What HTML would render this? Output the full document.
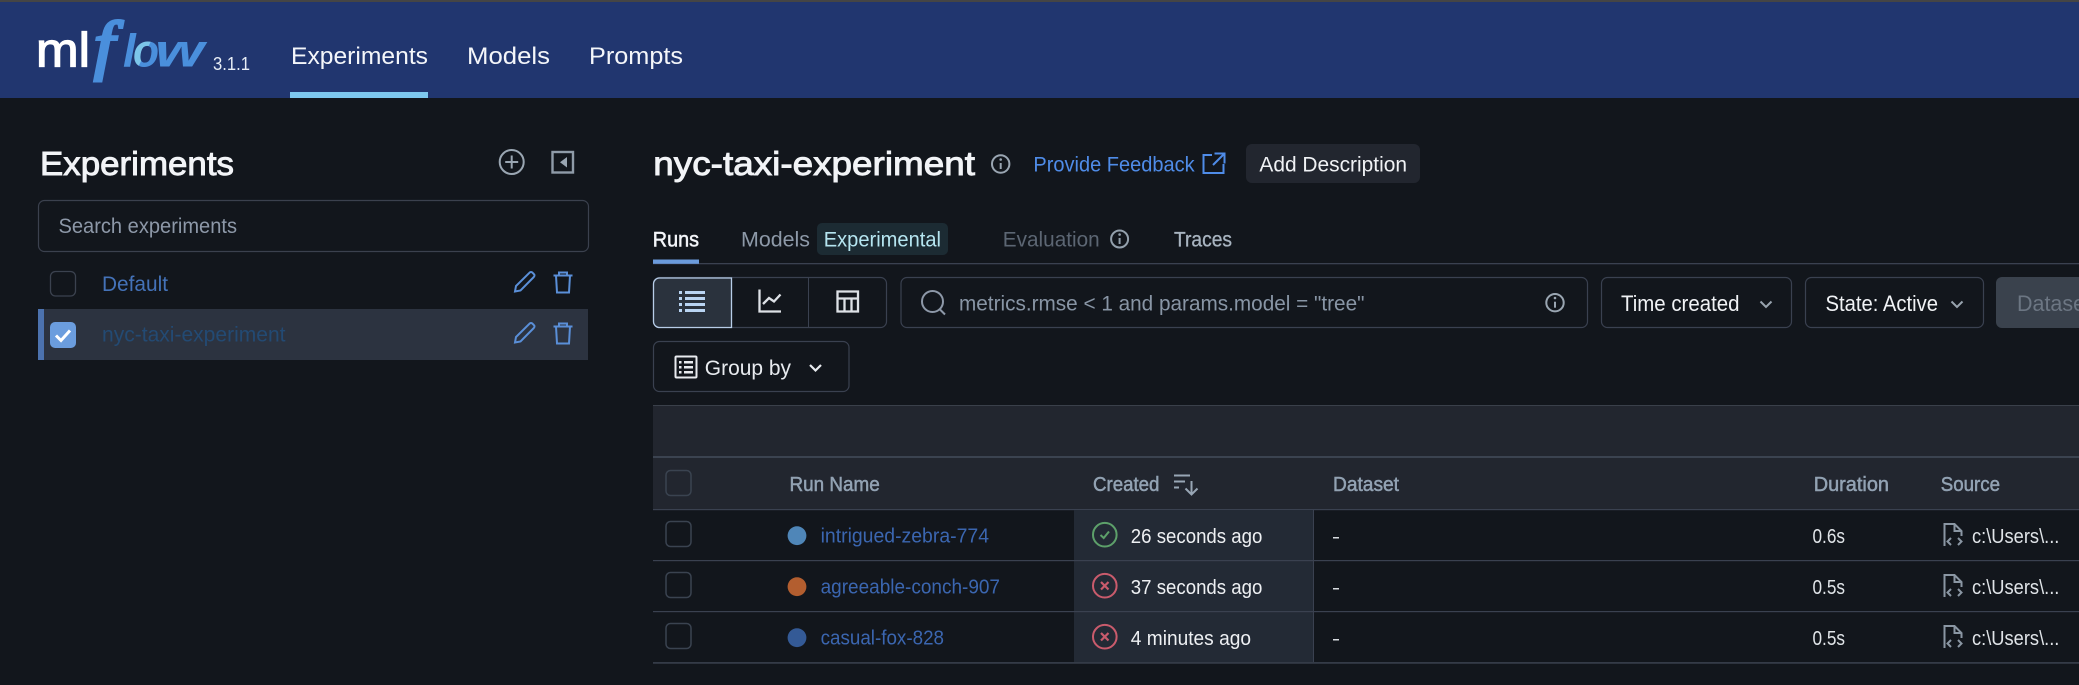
<!DOCTYPE html>
<html><head><meta charset="utf-8"><title>MLflow</title>
<style>
html,body{margin:0;padding:0;background:#12161c;width:2079px;height:685px;overflow:hidden}
svg{display:block}
text{font-family:"Liberation Sans",sans-serif}
</style></head><body>
<svg xmlns="http://www.w3.org/2000/svg" width="2079" height="685" viewBox="0 0 2079 685">
<defs><linearGradient id="og" x1="0" y1="0" x2="1" y2="1"><stop offset="0" stop-color="#7cc6ea"/><stop offset=".5" stop-color="#7cc6ea"/><stop offset=".51" stop-color="#4a8fdc"/><stop offset="1" stop-color="#4a8fdc"/></linearGradient></defs>
<rect width="2079" height="685" fill="#12161c"/>
<!-- header -->
<rect width="2079" height="2" fill="#454545"/>
<rect y="2" width="2079" height="96" fill="#21366f"/>
<rect x="290" y="92" width="138" height="6" fill="#7ec8ee"/>
<text x="36" y="66.7" font-size="48" fill="#fff" stroke="#fff" stroke-width="1.200" textLength="54" lengthAdjust="spacingAndGlyphs">ml</text>
<text transform="translate(94 67) scale(1.080 .96)" font-size="68" fill="#4a8fdc" stroke="#4a8fdc" stroke-width="3.200" style="font-family:'Liberation Serif',serif;font-style:italic">f</text>
<text x="123" y="66.7" font-size="46" font-style="italic" font-weight="bold" fill="#4a8fdc">l</text>
<text x="133" y="66.7" font-size="46" font-style="italic" font-weight="bold" fill="url(#og)" textLength="26" lengthAdjust="spacingAndGlyphs">o</text>
<text x="155" y="66.7" font-size="46" font-style="italic" font-weight="bold" fill="#4a8fdc" textLength="49" lengthAdjust="spacingAndGlyphs">w</text>
<text x="213" y="70" font-size="18" fill="#e8eef6" textLength="37" lengthAdjust="spacingAndGlyphs">3.1.1</text>
<text x="291" y="64" font-size="24.500" fill="#f4f6fa" textLength="137" lengthAdjust="spacingAndGlyphs">Experiments</text>
<text x="467" y="64" font-size="24.500" fill="#f4f6fa" textLength="83" lengthAdjust="spacingAndGlyphs">Models</text>
<text x="589" y="64" font-size="24.500" fill="#f4f6fa" textLength="94" lengthAdjust="spacingAndGlyphs">Prompts</text>
<!-- sidebar -->
<text x="40" y="175" font-size="33" fill="#f2f4f7" stroke="#f2f4f7" stroke-width=".9" textLength="194" lengthAdjust="spacingAndGlyphs">Experiments</text>
<g fill="none" stroke="#9aa6b2" stroke-width="2"><circle cx="511.7" cy="162" r="12"/><path d="M511.7 155.5v13M505.2 162h13"/></g>
<rect x="552.5" y="152" width="20.5" height="20.5" fill="none" stroke="#8f9ba8" stroke-width="2.400"/>
<path d="M567 157v10.500l-7-5.200z" fill="#9aa6b2"/>
<rect x="38.500" y="200.500" width="550" height="51" rx="6" fill="none" stroke="#3b414e" stroke-width="1.200"/>
<text x="58.500" y="233" font-size="21" fill="#8d98a8" textLength="178.500" lengthAdjust="spacingAndGlyphs">Search experiments</text>
<rect x="50.500" y="271.500" width="25" height="24.500" rx="5" fill="none" stroke="#3b424f" stroke-width="1.300"/>
<text x="102" y="291" font-size="21" fill="#4472b8" textLength="66" lengthAdjust="spacingAndGlyphs">Default</text>
<path d="M515 291.500l1-5.500L529.500 272.700a2 2 0 0 1 3 0l1.300 1.300a2 2 0 0 1 0 3L520.500 290.500z" fill="none" stroke="#5a8fd8" stroke-width="2"/>
<path d="M553.500 275.500h19M559 275.500v-3h8v3M556 275.500l1 17h12l1-17" fill="none" stroke="#5a8fd8" stroke-width="2"/>
<rect x="38" y="309" width="550" height="51" fill="#2c3340"/>
<rect x="38" y="309" width="6" height="51" fill="#4c72ae"/>
<rect x="50" y="322" width="26" height="26" rx="5" fill="#6b9dde"/>
<path d="M56 335.500l5 5 9-10" fill="none" stroke="#fff" stroke-width="3"/>
<text x="102" y="341.700" font-size="21" fill="#234a73" textLength="183.500" lengthAdjust="spacingAndGlyphs">nyc-taxi-experiment</text>
<path d="M515 342.500l1-5.500L529.500 323.700a2 2 0 0 1 3 0l1.300 1.300a2 2 0 0 1 0 3L520.500 341.500z" fill="none" stroke="#5a8fd8" stroke-width="2"/>
<path d="M553.500 326.500h19M559 326.500v-3h8v3M556 326.500l1 17h12l1-17" fill="none" stroke="#5a8fd8" stroke-width="2"/>
<!-- title row -->
<text x="653.300" y="175" font-size="33" fill="#f2f4f7" stroke="#f2f4f7" stroke-width=".9" textLength="321.700" lengthAdjust="spacingAndGlyphs">nyc-taxi-experiment</text>
<g fill="none" stroke="#9aa6b2" stroke-width="2"><circle cx="1000.700" cy="164" r="8.700"/><path d="M1000.700 163v6"/></g><circle cx="1000.700" cy="159.500" r="1.300" fill="#9aa6b2"/>
<text x="1033.400" y="171.700" font-size="21.500" fill="#4f8ce8" textLength="161.200" lengthAdjust="spacingAndGlyphs">Provide Feedback</text>
<path d="M1212 155h-8.500v18h20v-9M1214.500 153.500h10v10M1224 154l-11 11" fill="none" stroke="#4f8ce8" stroke-width="2"/>
<rect x="1246" y="144" width="174" height="39" rx="6" fill="#22262f"/>
<text x="1259.400" y="171.700" font-size="21.500" fill="#f0f2f5" textLength="147.600" lengthAdjust="spacingAndGlyphs">Add Description</text>
<!-- tabs -->
<rect x="653" y="263" width="1426" height="1.300" fill="#3a4150"/>
<rect x="653" y="259.500" width="46" height="4.300" fill="#6b9bdc"/>
<text x="652.800" y="246.700" font-size="21" fill="#f4f6fa" stroke="#f4f6fa" stroke-width=".5" textLength="46.200" lengthAdjust="spacingAndGlyphs">Runs</text>
<text x="741" y="246.700" font-size="21" fill="#8d99a8" textLength="69" lengthAdjust="spacingAndGlyphs">Models</text>
<rect x="817" y="223" width="131" height="32" rx="5" fill="#1c2b33"/>
<text x="823.700" y="246.700" font-size="21" fill="#b5e5f0" textLength="117.300" lengthAdjust="spacingAndGlyphs">Experimental</text>
<text x="1002.800" y="246.700" font-size="21" fill="#5c6673" textLength="96.900" lengthAdjust="spacingAndGlyphs">Evaluation</text>
<g fill="none" stroke="#93a0ac" stroke-width="2"><circle cx="1119.600" cy="239" r="8.500"/><path d="M1119.600 238v6"/></g><circle cx="1119.600" cy="234.500" r="1.300" fill="#93a0ac"/>
<text x="1174" y="246.700" font-size="21" fill="#a8b4c0" stroke="#a8b4c0" stroke-width=".3" textLength="58" lengthAdjust="spacingAndGlyphs">Traces</text>
<!-- toolbar -->
<rect x="653.500" y="277.500" width="233" height="50" rx="6" fill="none" stroke="#3a4150" stroke-width="1.200"/>
<path d="M731.500 278H659.500a6 6 0 0 0-6 6v37.500a6 6 0 0 0 6 6H731.500z" fill="#2a323d" stroke="#b7cde8" stroke-width="1.300"/>
<rect x="808" y="277.500" width="1" height="50" fill="#3a4150"/>
<g fill="#b9d4f2"><rect x="679" y="291" width="3" height="3"/><rect x="679" y="297" width="3" height="3"/><rect x="679" y="303" width="3" height="3"/><rect x="679" y="309" width="3" height="3"/><rect x="685" y="291" width="20" height="3"/><rect x="685" y="297" width="20" height="3"/><rect x="685" y="303" width="20" height="3"/><rect x="685" y="309" width="20" height="3"/></g>
<path d="M759.500 289.500V311.500H781M763 304l6-6 5 3.500 6.500-7" fill="none" stroke="#dde1e6" stroke-width="2.300"/>
<path d="M837.500 291.500h20.500v20h-20.500zM837.500 298.500h20.500M844.500 298.500v13M851.500 298.500v13" fill="none" stroke="#dde1e6" stroke-width="2.300"/>
<rect x="901" y="277.500" width="686.500" height="50" rx="6" fill="none" stroke="#3a4150" stroke-width="1.200"/>
<circle cx="932.500" cy="301.500" r="10.500" fill="none" stroke="#8d98a8" stroke-width="2"/><path d="M939.500 309l5.500 5.500" stroke="#8d98a8" stroke-width="2"/>
<text x="959" y="310.700" font-size="21" fill="#8895a5" textLength="405.500" lengthAdjust="spacingAndGlyphs">metrics.rmse &lt; 1 and params.model = "tree"</text>
<g fill="none" stroke="#9aa6b2" stroke-width="2"><circle cx="1555" cy="302.700" r="8.700"/><path d="M1555 301.700v6"/></g><circle cx="1555" cy="298" r="1.300" fill="#9aa6b2"/>
<rect x="1601.500" y="277.500" width="190" height="50" rx="6" fill="none" stroke="#3a4150" stroke-width="1.200"/>
<text x="1621" y="311" font-size="22" fill="#f0f2f5" textLength="118.500" lengthAdjust="spacingAndGlyphs">Time created</text>
<path d="M1760.500 301.500l5.500 5.500 5.500-5.500" fill="none" stroke="#98a3ae" stroke-width="2"/>
<rect x="1805.500" y="277.500" width="178" height="50" rx="6" fill="none" stroke="#3a4150" stroke-width="1.200"/>
<text x="1825.500" y="311" font-size="22" fill="#f0f2f5" textLength="112.500" lengthAdjust="spacingAndGlyphs">State: Active</text>
<path d="M1951.500 301.500l5.500 5.500 5.500-5.500" fill="none" stroke="#98a3ae" stroke-width="2"/>
<rect x="1996" y="277" width="100" height="51" rx="6" fill="#3a424d"/>
<text x="2017" y="311" font-size="22" fill="#6c7683" textLength="74" lengthAdjust="spacingAndGlyphs">Dataset</text>
<rect x="653.500" y="341.500" width="195.500" height="50" rx="6" fill="none" stroke="#3a4150" stroke-width="1.200"/>
<rect x="675.500" y="356.500" width="21" height="21" rx="1" fill="none" stroke="#e8ebef" stroke-width="2"/>
<g fill="#e8ebef"><rect x="679" y="361" width="2.500" height="2.500"/><rect x="679" y="366" width="2.500" height="2.500"/><rect x="679" y="371" width="2.500" height="2.500"/><rect x="684" y="361" width="9" height="2.500"/><rect x="684" y="366" width="9" height="2.500"/><rect x="684" y="371" width="9" height="2.500"/></g>
<text x="704.800" y="375" font-size="21.500" fill="#e8ebef" textLength="86.200" lengthAdjust="spacingAndGlyphs">Group by</text>
<path d="M810 365l5.500 5.500 5.500-5.500" fill="none" stroke="#e8ebef" stroke-width="2.200"/>
<!-- table -->
<rect x="653" y="405" width="1426" height="104" fill="#22262f"/>
<rect x="653" y="405" width="1426" height="1" fill="#3a404a"/>
<rect x="653" y="456" width="1426" height="2" fill="#3b4350"/>
<rect x="653" y="509" width="1426" height="1.200" fill="#3a4150"/>
<rect x="1074" y="510" width="239.500" height="152" fill="#232a35"/>
<rect x="1313" y="510" width="1" height="152" fill="#3a4150"/>
<rect x="653" y="560" width="1426" height="1.200" fill="#3a4150"/>
<rect x="653" y="611" width="1426" height="1.200" fill="#3a4150"/>
<rect x="653" y="662" width="1426" height="1.800" fill="#343b47"/>
<g fill="none" stroke="#3a4350" stroke-width="1.500">
<rect x="666" y="470.500" width="25" height="25" rx="4.500"/>
<rect x="666" y="521.500" width="25" height="25" rx="4.500"/>
<rect x="666" y="572.500" width="25" height="25" rx="4.500"/>
<rect x="666" y="623.500" width="25" height="25" rx="4.500"/>
</g>
<g font-size="20" fill="#92a2b3" stroke="#92a2b3" stroke-width=".5">
<text x="789.500" y="491" textLength="90.300" lengthAdjust="spacingAndGlyphs">Run Name</text>
<text x="1093" y="491" textLength="66.400" lengthAdjust="spacingAndGlyphs">Created</text>
<text x="1333" y="491" textLength="66" lengthAdjust="spacingAndGlyphs">Dataset</text>
<text x="1813.700" y="491" textLength="75.300" lengthAdjust="spacingAndGlyphs">Duration</text>
<text x="1940.800" y="491" textLength="59.200" lengthAdjust="spacingAndGlyphs">Source</text>
</g>
<path d="M1174 475.500h16M1174 481.500h11M1174 487.500h5M1191.500 481v13M1185.500 488.500l6 6 6-6" fill="none" stroke="#98a6b5" stroke-width="2"/>
<circle cx="797" cy="535.700" r="9.400" fill="#4f86b8"/>
<circle cx="797" cy="586.700" r="9.400" fill="#b35e2f"/>
<circle cx="797" cy="637.700" r="9.400" fill="#345a96"/>
<g font-size="20" fill="#3b66b0">
<text x="820.600" y="542.700" textLength="168.400" lengthAdjust="spacingAndGlyphs">intrigued-zebra-774</text>
<text x="820.600" y="593.700" textLength="179.400" lengthAdjust="spacingAndGlyphs">agreeable-conch-907</text>
<text x="820.600" y="644.700" textLength="123.400" lengthAdjust="spacingAndGlyphs">casual-fox-828</text>
</g>
<g fill="none" stroke-width="2">
<circle cx="1104.800" cy="534.700" r="11.800" stroke="#5da06a"/><path d="M1100.500 535l3.200 3 5.300-6.500" stroke="#5da06a"/>
<circle cx="1104.800" cy="585.700" r="11.800" stroke="#c95b6c"/><path d="M1101 582l7.500 7.500M1108.500 582l-7.500 7.500" stroke="#c95b6c" stroke-width="2.200"/>
<circle cx="1104.800" cy="636.700" r="11.800" stroke="#c95b6c"/><path d="M1101 633l7.500 7.500M1108.500 633l-7.500 7.500" stroke="#c95b6c" stroke-width="2.200"/>
</g>
<g font-size="20" fill="#eef0f3">
<text x="1130.800" y="543" textLength="131.600" lengthAdjust="spacingAndGlyphs">26 seconds ago</text>
<text x="1130.800" y="594" textLength="131.600" lengthAdjust="spacingAndGlyphs">37 seconds ago</text>
<text x="1130.800" y="645" textLength="120.200" lengthAdjust="spacingAndGlyphs">4 minutes ago</text>
</g>
<g fill="#d8dce0"><rect x="1333" y="537" width="6" height="1.500"/><rect x="1333" y="588" width="6" height="1.500"/><rect x="1333" y="639" width="6" height="1.500"/></g>
<g font-size="20.500" fill="#e0e4e8">
<text x="1812.500" y="543" textLength="32.500" lengthAdjust="spacingAndGlyphs">0.6s</text>
<text x="1812.500" y="594" textLength="32.500" lengthAdjust="spacingAndGlyphs">0.5s</text>
<text x="1812.500" y="645" textLength="32.500" lengthAdjust="spacingAndGlyphs">0.5s</text>
<text x="1972" y="543" textLength="87.400" lengthAdjust="spacingAndGlyphs">c:\Users\...</text>
<text x="1972" y="594" textLength="87.400" lengthAdjust="spacingAndGlyphs">c:\Users\...</text>
<text x="1972" y="645" textLength="87.400" lengthAdjust="spacingAndGlyphs">c:\Users\...</text>
</g>
<g fill="none" stroke="#8a96a3" stroke-width="2">
<path d="M1944.500 546V524h10l7 7v5M1954.500 524v7h7M1951 538l-3.500 3.500 3.500 3.500M1958 538l3.500 3.500-3.500 3.500"/>
<path d="M1944.500 597V575h10l7 7v5M1954.500 575v7h7M1951 589l-3.500 3.500 3.500 3.500M1958 589l3.500 3.500-3.500 3.500"/>
<path d="M1944.500 648V626h10l7 7v5M1954.500 626v7h7M1951 640l-3.500 3.500 3.500 3.500M1958 640l3.500 3.500-3.500 3.500"/>
</g>
</svg>
</body></html>
